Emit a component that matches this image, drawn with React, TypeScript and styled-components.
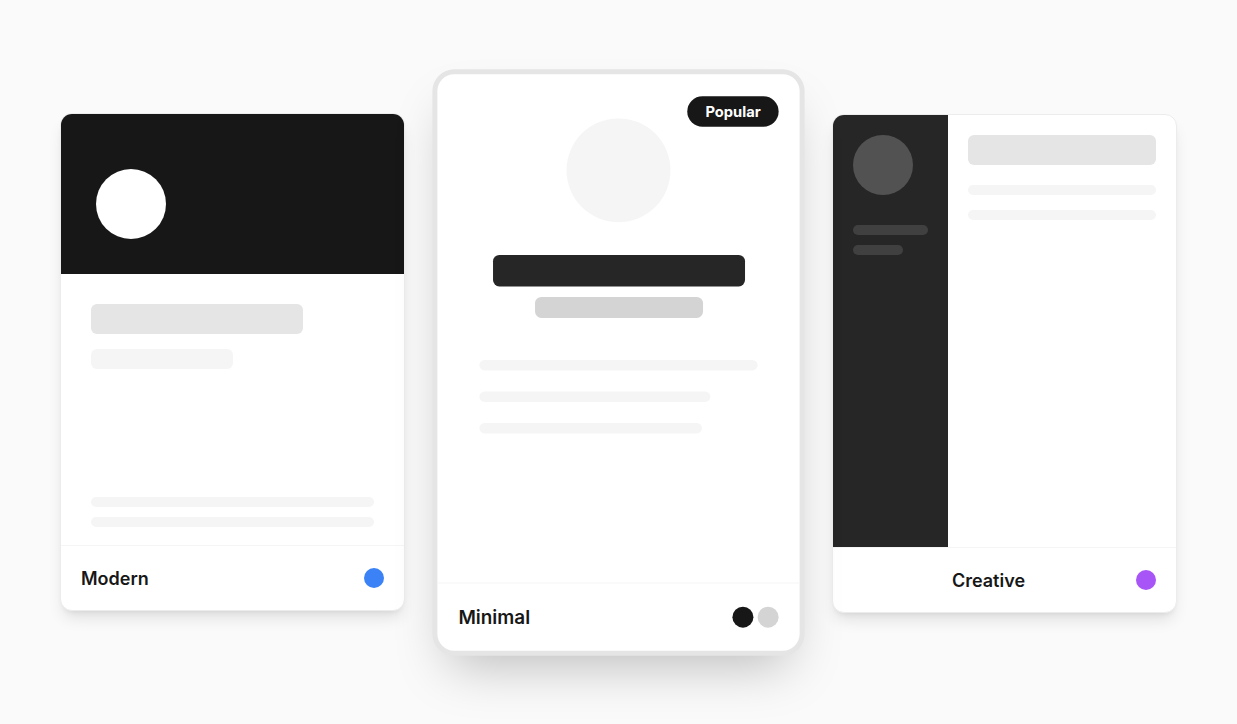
import React from "react";
import styled, { createGlobalStyle } from "styled-components";

const GlobalStyle = createGlobalStyle`
   * { box-sizing: border-box; }
   html, body {
      margin: 0;
      padding: 0;
      background: #fafafa;
      font-family: Inter, "Noto Sans", sans-serif;
   }
`;

const Stage = styled.div`
   height: 724px;
   display: flex;
   align-items: center;
   justify-content: center;
   gap: 41px;
`;

const Card = styled.div<{ $height: number }>`
   position: relative;
   width: 345px;
   height: ${({ $height }) => $height}px;
   display: flex;
   flex-direction: column;
   background: #fff;
   border: 1px solid #ececec;
   border-radius: 12px;
   overflow: hidden;
   box-shadow: 0 10px 15px -3px rgba(0, 0, 0, 0.1), 0 4px 6px -4px rgba(0, 0, 0, 0.1);
`;

const FeaturedCard = styled(Card)`
   border: none;
   border-radius: 16px;
   transform: scale(1.05);
   box-shadow: 0 0 0 4.75px #e5e5e5, 0 25px 50px -12px rgba(0, 0, 0, 0.25);
   z-index: 1;
`;

const Bar = styled.div<{ $w: string; $h: number; $color: string; $round?: boolean }>`
   width: ${({ $w }) => $w};
   height: ${({ $h }) => $h}px;
   background: ${({ $color }) => $color};
   border-radius: ${({ $round }) => ($round ? "999px" : "6px")};
   flex-shrink: 0;
`;

const Circle = styled.div<{ $size: number; $color: string }>`
   width: ${({ $size }) => $size}px;
   height: ${({ $size }) => $size}px;
   border-radius: 50%;
   background: ${({ $color }) => $color};
   flex-shrink: 0;
`;

const Footer = styled.div`
   height: 65px;
   flex-shrink: 0;
   display: flex;
   align-items: center;
   gap: 12px;
   padding: 0 20px;
   border-top: 1px solid #f5f5f5;
`;

const Title = styled.span<{ $center?: boolean }>`
   flex: 1;
   font-size: 18px;
   font-weight: 600;
   color: #171717;
   text-align: ${({ $center }) => ($center ? "center" : "left")};
`;

const Dots = styled.div`
   display: flex;
   gap: 4px;
`;

/* Modern */
const DarkHeader = styled.div`
   height: 160px;
   flex-shrink: 0;
   background: #171717;
   display: flex;
   align-items: flex-end;
   padding: 0 35px 35px;
`;

const ModernBody = styled.div`
   flex: 1;
   display: flex;
   flex-direction: column;
   padding: 30px 30px 18px;
`;

const Stack = styled.div<{ $gap: number; $align?: string }>`
   display: flex;
   flex-direction: column;
   gap: ${({ $gap }) => $gap}px;
   align-items: ${({ $align }) => $align || "stretch"};
`;

const Push = styled.div`
   margin-top: auto;
`;

/* Minimal */
const Badge = styled.span`
   position: absolute;
   top: 21px;
   right: 20px;
   padding: 6px 17px;
   border-radius: 999px;
   background: #171717;
   color: #fff;
   font-size: 14px;
   line-height: 17px;
   font-weight: 700;
`;

const MinimalBody = styled.div`
   flex: 1;
   display: flex;
   flex-direction: column;
   align-items: center;
   padding: 42px 40px 0;
`;

const Lines = styled(Stack)`
   align-self: stretch;
   margin-top: 40px;
`;

/* Creative */
const Split = styled.div`
   flex: 1;
   display: flex;
`;

const Sidebar = styled.div`
   width: 115px;
   background: #262626;
   padding: 20px;
   display: flex;
   flex-direction: column;
`;

const Main = styled.div`
   flex: 1;
   padding: 20px;
`;

const ModernCard: React.FC = () => (
   <Card $height={498}>
      <DarkHeader>
         <Circle $size={70} $color="#fff" />
      </DarkHeader>
      <ModernBody>
         <Stack $gap={15}>
            <Bar $w="75%" $h={30} $color="#e5e5e5" />
            <Bar $w="50%" $h={20} $color="#f5f5f5" />
         </Stack>
         <Push>
            <Stack $gap={10}>
               <Bar $w="100%" $h={10} $color="#f5f5f5" $round />
               <Bar $w="100%" $h={10} $color="#f5f5f5" $round />
            </Stack>
         </Push>
      </ModernBody>
      <Footer>
         <Title>Modern</Title>
         <Circle $size={20} $color="#3b82f6" />
      </Footer>
   </Card>
);

const MinimalCard: React.FC = () => (
   <FeaturedCard $height={549}>
      <Badge>Popular</Badge>
      <MinimalBody>
         <Circle $size={99} $color="#f5f5f5" />
         <Stack $gap={10} $align="center" style={{ marginTop: 31 }}>
            <Bar $w="240px" $h={30} $color="#262626" />
            <Bar $w="160px" $h={20} $color="#d4d4d4" />
         </Stack>
         <Lines $gap={20}>
            <Bar $w="100%" $h={10} $color="#f5f5f5" $round />
            <Bar $w="83%" $h={10} $color="#f5f5f5" $round />
            <Bar $w="80%" $h={10} $color="#f5f5f5" $round />
         </Lines>
      </MinimalBody>
      <Footer>
         <Title>Minimal</Title>
         <Dots>
            <Circle $size={20} $color="#171717" />
            <Circle $size={20} $color="#d4d4d4" />
         </Dots>
      </Footer>
   </FeaturedCard>
);

const CreativeCard: React.FC = () => (
   <Card $height={499} style={{ marginTop: 3 }}>
      <Split>
         <Sidebar>
            <Circle $size={60} $color="#525252" />
            <Stack $gap={10} style={{ marginTop: 30 }}>
               <Bar $w="100%" $h={10} $color="#404040" $round />
               <Bar $w="66%" $h={10} $color="#404040" $round />
            </Stack>
         </Sidebar>
         <Main>
            <Bar $w="100%" $h={30} $color="#e5e5e5" />
            <Stack $gap={15} style={{ marginTop: 20 }}>
               <Bar $w="100%" $h={10} $color="#f5f5f5" $round />
               <Bar $w="100%" $h={10} $color="#f5f5f5" $round />
            </Stack>
         </Main>
      </Split>
      <Footer>
         <Title $center>Creative</Title>
         <Circle $size={20} $color="#a855f7" />
      </Footer>
   </Card>
);

const App: React.FC = () => (
   <>
      <GlobalStyle />
      <Stage>
         <ModernCard />
         <MinimalCard />
         <CreativeCard />
      </Stage>
   </>
);

export default App;
